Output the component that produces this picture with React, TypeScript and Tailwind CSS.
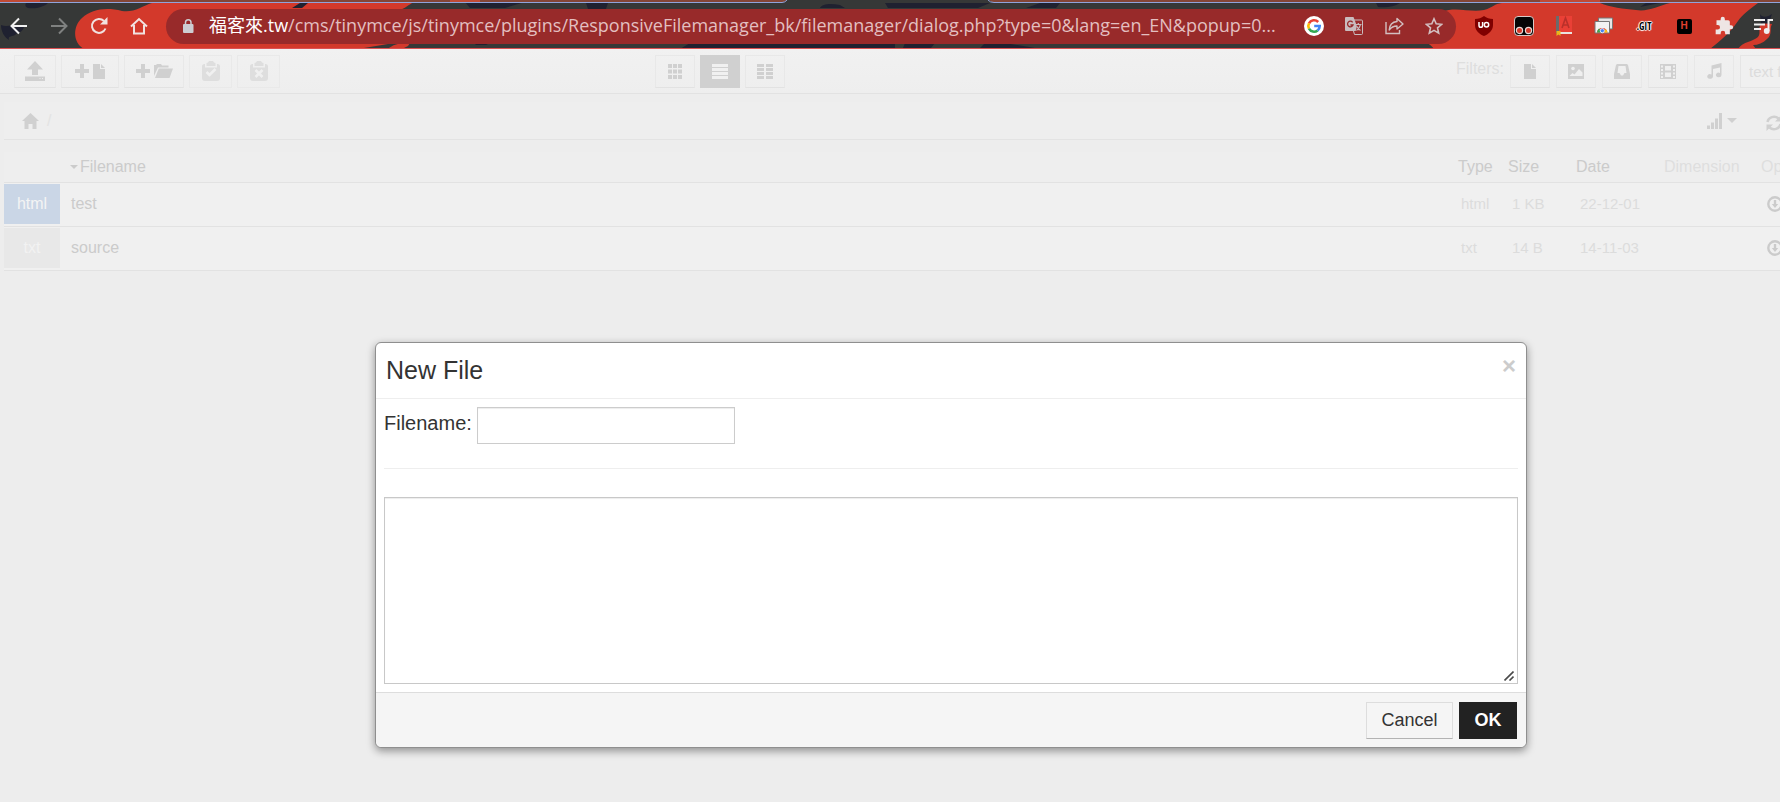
import type { ReactNode } from "react";

type IconProps = { className?: string };

/* ---------- browser bar ---------- */

function ThemeArtwork() {
  return (
    <svg className="absolute inset-0 h-full w-full" viewBox="0 0 1780 49" preserveAspectRatio="none" aria-hidden="true">
      <rect width="1780" height="49" fill="#363837" />
      <g fill="#1f2130">
        <path d="M26 3h22c-4 4-12 6-20 5-3-1-3-3-2-5z" />
        <path d="M1 25c8 3 15-3 23 2-2 6-6 5-9 8-5 2-7 1-6 5-5-3-8-9-8-15z" />
        <path d="M465 2h60l-20 6h-35zM586 3h22l-2 6h-18zM820 8c2-4 10-5 20-3l5 3zM885 3h105l-12 5h-90zM1040 3h20l-4 5h-30zM690 43h205v6H680zM474 43h16l-4 2h-10zM905 43h30l-4 5h-28zM985 43h20l30 5h-55zM1376 3h24c-6 4-14 5-22 4z" />
      </g>
      <g fill="#d3392b">
        <path d="M84 49C72 42 73 26 82 18c10-9 24-11 40-7 12 2 20-5 30-8h260c-5 3-8 6-18 10v30l-36 6z" />
        <path d="M388 49c4-4 10-6 22-6l-2 3-6 3z" />
        <path d="M1434 49c-3-4-7-7-12-7l20-30c14-6 28 1 42-2 10-3 10-6 18-7h256c-8 6-16 12-20 18-8 12-18 20-28 28z" />
        <path d="M1738 49c5-8 15-7 20-12 4-5-2-10 5-14l9 1c-3 5 1 10-5 15-4 4-9 6-14 6l3 4z" />
      </g>
      <path d="M1600 3h70c-12 3-22 9-34 7-12-1-26-3-36-7z" fill="#363837" />
      <path d="M292 8l8-5h8l-6 5zM1760 14c2 4 8 3 12 0l-3 9-8 1zM1640 7l20-4h-14z" fill="#1f2130" />
      <path d="M0 0h787l-3 2H0zM989 0h791v2H992z" fill="#834536" />
      <path d="M0 0h40v2H0zM450 0h30v2h-30zM1540 0h60v2h-60z" fill="#c04a35" />
      <path d="M0 2.500h782q3 0 5-2.500M988 0q2 2.500 6 2.500h786" fill="none" stroke="#8fa3dc" />
      <rect y="48" width="1780" height="1" fill="#dc5152" />
    </svg>
  );
}

const BackIcon = () => (
  <svg width="18" height="18" viewBox="0 0 18 18" fill="none" stroke="#f1f1f1" strokeWidth="2"><path d="M17 9H2M9 1.500L1.500 9 9 16.500" /></svg>
);
const ForwardIcon = () => (
  <svg width="18" height="18" viewBox="0 0 18 18" fill="none" stroke="#7f8180" strokeWidth="2"><path d="M1 9h15M9 1.500L16.500 9 9 16.500" /></svg>
);
const ReloadIcon = () => (
  <svg width="18" height="18" viewBox="0 0 18 18"><path d="M15.500 11.500A7 7 0 1 1 14 4" fill="none" stroke="#f1e2e0" strokeWidth="2" /><path d="M17.500 0v7.500H10z" fill="#f1e2e0" /></svg>
);
const ChromeHomeIcon = () => (
  <svg width="18" height="18" viewBox="0 0 18 18" fill="none" stroke="#f1e2e0" strokeWidth="2"><path d="M1 9.500L9 2l8 7.500M4 8v8.500h10V8" /></svg>
);
const LockIcon = () => (
  <svg width="12" height="14" viewBox="0 0 12 14"><rect x="1" y="5" width="10.500" height="9" rx="1" fill="#cdcdd2" /><path d="M3.500 5V3.500a2.700 2.700 0 0 1 5.500 0V5" fill="none" stroke="#cdcdd2" strokeWidth="1.500" /></svg>
);
const GoogleIcon = () => (
  <svg width="20" height="20" viewBox="0 0 20 20" fill="none" strokeWidth="2.600">
    <circle cx="10" cy="10" r="10" fill="#fff" />
    <path d="M14.200 6A5.700 5.700 0 0 0 5 7.300" stroke="#ea4335" />
    <path d="M5 7.300a5.700 5.700 0 0 0 0 5.400" stroke="#fbbc05" />
    <path d="M5 12.700a5.700 5.700 0 0 0 8.600 1.700" stroke="#34a853" />
    <path d="M13.600 14.400A5.700 5.700 0 0 0 15.700 10H10.200" stroke="#4285f4" />
  </svg>
);
const TranslateIcon = () => (
  <svg width="18" height="18" viewBox="0 0 18 18">
    <path d="M1 0h7.500l5.200 14H1a1 1 0 0 1-1-1V1a1 1 0 0 1 1-1z" fill="#c9bcbe" />
    <path d="M9 3h7.500a1 1 0 0 1 1 1v12.500a1 1 0 0 1-1 1H9.500l-1-3.500" fill="none" stroke="#c9bcbe" />
    <path d="M12 9l1.700 5-3 0z" fill="#982a2a" />
    <path d="M7.600 5.300A2.800 2.800 0 1 0 8 8H5.400" fill="none" stroke="#982a2a" strokeWidth="1.300" />
    <path d="M10.500 7.500h6M13.300 6v1.500M15.500 7.500c-.5 3-2 4.500-4 6M12 9.500c1 2 2 3 3.500 4" fill="none" stroke="#c9bcbe" strokeWidth="1.200" />
  </svg>
);
const ShareIcon = () => (
  <svg width="19" height="18" viewBox="0 0 19 18" fill="none" stroke="#d3bfc1" strokeWidth="1.400">
    <path d="M1 5v11.500h13.500V13" /><path d="M12 1.500L18 7l-6 5V9C8.500 9 6 10.500 4.200 13 4.500 8.500 7 5 12 4.500z" strokeLinejoin="round" />
  </svg>
);
const StarIcon = () => (
  <svg width="18" height="18" viewBox="0 0 18 18" fill="none" stroke="#d3bfc1" strokeWidth="1.600"><path d="M9 1.800l2.200 5 5.400.5-4.100 3.600 1.200 5.300L9 13.400l-4.700 2.800 1.200-5.300-4.100-3.600 5.400-.5z" /></svg>
);
const ShieldIcon = () => (
  <svg width="18" height="20" viewBox="0 0 18 20"><path d="M9 0c2.500 2 5.500 2.800 9 3v6c0 5.500-4 9-9 11-5-2-9-5.500-9-11V3c3.500-.2 6.500-1 9-3z" fill="#800000" /><path d="M4 6v3.500a1.800 1.800 0 0 0 3.600 0V6" fill="none" stroke="#fff" strokeWidth="1.500" /><circle cx="11.500" cy="8.700" r="2.200" fill="none" stroke="#fff" strokeWidth="1.500" /></svg>
);
const MonkeyIcon = () => (
  <svg width="20" height="20" viewBox="0 0 20 20"><rect x=".5" y=".5" width="19" height="19" rx="3.500" fill="#050505" stroke="#d9c9c6" /><g fill="#d3392b" stroke="#e9d9d6" strokeWidth="1.200"><circle cx="5.500" cy="14.500" r="3.100" /><circle cx="14.500" cy="14.500" r="3.100" /></g></svg>
);
const DictionaryIcon = () => (
  <svg width="18" height="20" viewBox="0 0 18 20"><path d="M1 0h3v17H1z" fill="#6b6b6b" /><path d="M4 0h13v16H4z" fill="#ea4036" /><path d="M7 12l3.500-10L14 12M8.300 9h4.500" fill="none" stroke="#b9302a" strokeWidth="1.600" /><path d="M3 16h14v2H3z" fill="#e9e4df" /><path d="M1.500 15h4v5l-2-1.500-2 1.500z" fill="#e9b61c" /></svg>
);
const CaptureIcon = () => (
  <svg width="20" height="18" viewBox="0 0 20 18"><path d="M4.500 1h14v11h-14z" fill="#e6e6e6" stroke="#777" /><path d="M1 4.500h14.500V16H1z" fill="#f3f3f3" stroke="#777" /><path d="M3 15.500a5.300 5.300 0 0 1 10.500 0z" fill="#e33b2e" /><path d="M3 15.500a5.300 5.300 0 0 1 2-4l2.500 4z" fill="#38a852" /><path d="M11.500 12a5 5 0 0 1 2 3.500H10z" fill="#fbc116" /><circle cx="8.300" cy="13.700" r="2.100" fill="#4285f4" stroke="#fff" strokeWidth=".8" /></svg>
);
const PuzzleIcon = () => (
  <svg width="20" height="20" viewBox="0 0 24 24" fill="#eee5e4"><path d="M20.500 11H19V7a2 2 0 0 0-2-2h-4V3.500a2.500 2.500 0 0 0-5 0V5H3v5.800h1.500a2.700 2.700 0 0 1 0 5.400H2V22h6v-1.500a2.700 2.700 0 0 1 5.400 0V22H19v-6h1.500a2.500 2.500 0 0 0 0-5z" /></svg>
);
const PlaylistIcon = () => (
  <svg width="20" height="17" viewBox="0 0 20 17"><path d="M0 2h11M0 6.500h11M0 11h7" stroke="#eee" strokeWidth="2" /><path d="M14.500 13V2H19" fill="none" stroke="#eee" strokeWidth="2" /><circle cx="12.700" cy="13" r="2.900" fill="#eee" /></svg>
);

function BarButton({ label, children, className = "" }: { label: string; children: ReactNode; className?: string }) {
  return (
    <button type="button" aria-label={label} className={`flex h-6 w-5 shrink-0 items-center justify-center ${className}`}>
      {children}
    </button>
  );
}

function BrowserBar() {
  return (
    <header className="relative h-[49px] overflow-hidden">
      <ThemeArtwork />
      <div className="relative flex h-full items-center gap-5 pt-[3px] pr-[6px] pl-[9px]">
        <nav className="flex items-center gap-5" aria-label="Browser">
          <BarButton label="Back"><BackIcon /></BarButton>
          <BarButton label="Forward"><ForwardIcon /></BarButton>
          <BarButton label="Reload"><ReloadIcon /></BarButton>
          <BarButton label="Home"><ChromeHomeIcon /></BarButton>
        </nav>
        <div className="-ml-[3px] flex h-[35px] min-w-0 flex-1 items-center rounded-full bg-[#982a2a] pr-3 pl-4">
          <LockIcon />
          <div className="ml-[15px] min-w-0 flex-1 overflow-hidden pb-[2px] font-['Open_Sans','Noto_Sans_CJK_TC',sans-serif] text-lg leading-6 whitespace-nowrap text-[#e3bfc0]">
            <span className="text-white">福客來.tw</span>/cms/tinymce/js/tinymce/plugins/ResponsiveFilemanager_bk/filemanager/dialog.php?type=0&amp;lang=en_EN&amp;popup=0...
          </div>
          <div className="flex items-center gap-5">
            <BarButton label="Search with Google"><GoogleIcon /></BarButton>
            <BarButton label="Translate"><TranslateIcon /></BarButton>
            <BarButton label="Share"><ShareIcon /></BarButton>
            <BarButton label="Bookmark"><StarIcon /></BarButton>
          </div>
        </div>
        <div className="-ml-[2px] flex items-center gap-5">
          <BarButton label="uBlock Origin"><ShieldIcon /></BarButton>
          <BarButton label="Tampermonkey"><MonkeyIcon /></BarButton>
          <BarButton label="Dictionary"><DictionaryIcon /></BarButton>
          <BarButton label="Screen capture"><CaptureIcon /></BarButton>
          <BarButton label="Git">
            <span className="font-['Open_Sans_Condensed','DejaVu_Sans_Condensed','Liberation_Sans',sans-serif] text-[10px] leading-3 font-bold text-black [text-shadow:0_0_1px_#fff,0_0_1px_#fff,0_0_1px_#fff,1px_0_1px_#fff,-1px_0_1px_#fff,0_1px_1px_#fff,0_-1px_1px_#fff]">.GIT</span>
          </BarButton>
          <BarButton label="H extension">
            <span className="flex h-[15px] w-[15px] items-center justify-center rounded-[2px] bg-black font-['Liberation_Sans',sans-serif] text-[10px] leading-3 font-bold text-[#e0402f]">H</span>
          </BarButton>
          <BarButton label="Extensions"><PuzzleIcon /></BarButton>
          <BarButton label="Media control"><PlaylistIcon /></BarButton>
        </div>
      </div>
    </header>
  );
}

/* ---------- file manager icons ---------- */

const UploadIcon = () => (
  <svg width="20" height="20" viewBox="0 0 20 20" fill="currentColor"><path d="M10 0l8 8.500h-5V14H7V8.500H2zM0 15.500h20V20H0z" /><path d="M14.500 17h1v1h-1zM17 17h1v1h-1z" fill="#eee" /></svg>
);
const PlusIcon = () => (
  <svg width="14" height="14" viewBox="0 0 14 14" fill="currentColor"><path d="M5 0h4v5h5v4H9v5H5V9H0V5h5z" /></svg>
);
const FileIcon = () => (
  <svg width="12" height="15" viewBox="0 0 12 15" fill="currentColor"><path d="M0 0h7v5h5v10H0zM8 0l4 4H8z" /></svg>
);
const FolderIcon = () => (
  <svg width="19" height="14" viewBox="0 0 19 14" fill="currentColor"><path d="M0 12V1h2l1-1h4l1 1.500h6.500V3.500H4z" /><path d="M4.800 4.500H19L15.500 14H1z" /></svg>
);
const ClipboardIcon = ({ mark }: { mark: string }) => (
  <svg width="18" height="20" viewBox="0 0 18 20"><path d="M6 1.500L7 0h4l1 1.500 1.500.5v3h-9V2z" fill="currentColor" /><path d="M3 3v3.500h12V3a2.500 2.500 0 0 1 3 2.500V17a3 3 0 0 1-3 3H3a3 3 0 0 1-3-3V5.500A2.500 2.500 0 0 1 3 3z" fill="currentColor" /><path d={mark} fill="none" stroke="#f0f0f0" strokeWidth="2.600" /></svg>
);
const GridIcon = () => (
  <svg width="14" height="15" viewBox="0 0 14 15" fill="currentColor"><path d="M0 0h4v4H0zM5 0h4v4H5zM10 0h4v4h-4zM0 5.500h4v4H0zM5 5.500h4v4H5zM10 5.500h4v4h-4zM0 11h4v4H0zM5 11h4v4H5zM10 11h4v4h-4z" /></svg>
);
const LinesIcon = () => (
  <svg width="16" height="15" viewBox="0 0 16 15" fill="currentColor"><path d="M0 0h16v3H0zM0 4h16v3H0zM0 8h16v3H0zM0 12h16v3H0z" /></svg>
);
const ColumnsIcon = () => (
  <svg width="16" height="15" viewBox="0 0 16 15" fill="currentColor"><path d="M0 0h7v3H0zM0 4h7v3H0zM0 8h7v3H0zM0 12h7v3H0zM9 0h7v3H9zM9 4h7v3H9zM9 8h7v3H9zM9 12h7v3H9z" /></svg>
);
const PictureIcon = () => (
  <svg width="16" height="15" viewBox="0 0 16 15"><path d="M0 0h16v15H0z" fill="currentColor" /><circle cx="5" cy="4.500" r="1.800" fill="#efefef" /><path d="M1.500 12l3-3 2 1.500L11 5l3.500 3.500V12z" fill="#efefef" /></svg>
);
const InboxIcon = () => (
  <svg width="16" height="15" viewBox="0 0 16 15" fill="currentColor" fillRule="evenodd"><path d="M3 0h10l1 1 2 9v5H0v-5l2-9zM4.500 2L3.500 9h2l1.500 2.500h2L10.500 9h2l-1-7z" /></svg>
);
const FilmIcon = () => (
  <svg width="16" height="15" viewBox="0 0 16 15" fill="currentColor" fillRule="evenodd"><path d="M0 0h16v15H0zM1 1.500v2h2v-2zM1 5v2h2V5zM1 8.500v2h2v-2zM1 12v2h2v-2zM13 1.500v2h2v-2zM13 5v2h2V5zM13 8.500v2h2v-2zM13 12v2h2v-2zM5 2v4.500h6V2zM5 8.500V13h6V8.500z" /></svg>
);
const MusicIcon = () => (
  <svg width="15" height="16" viewBox="0 0 15 16" fill="currentColor"><path d="M4.500 2.500L14.500 0v12a2.800 2.300 0 1 1-1.500-2V4.500L6 6v7.500a2.900 2.300 0 1 1-1.500-2z" /></svg>
);
const HomeIcon = () => (
  <svg width="17" height="16" viewBox="0 0 17 16" fill="currentColor"><path d="M8.500 0L17 8h-2.500v8h-4v-5h-4v5h-4V8H0z" /></svg>
);
const SignalIcon = () => (
  <svg width="15" height="16" viewBox="0 0 15 16" fill="currentColor"><path d="M0 12.500h3V16H0zM4 9.500h3V16H4zM8 5.500h3V16H8zM12 0h3v16h-3z" /></svg>
);
const CaretIcon = ({ className = "" }: IconProps) => (
  <svg width="10" height="5" viewBox="0 0 10 5" fill="currentColor" className={className}><path d="M0 0h10L5 5z" /></svg>
);
const RefreshIcon = () => (
  <svg width="16" height="16" viewBox="0 0 16 16"><path d="M1.500 7a6.500 6 0 0 1 11-3.500M14.500 9a6.500 6 0 0 1-11 3.500" fill="none" stroke="currentColor" strokeWidth="2.400" /><path d="M15.500 0v6.500H9zM.5 16V9.500H7z" fill="currentColor" /></svg>
);
const DownloadIcon = () => (
  <svg width="16" height="16" viewBox="0 0 16 16"><circle cx="8" cy="8" r="6.700" fill="none" stroke="currentColor" strokeWidth="2.400" /><path d="M6.800 4h2.400v4h2L8 12 4.800 8h2z" fill="currentColor" /></svg>
);

function ToolButton({ label, width, active, faint, children }: { label: string; width: string; active?: boolean; faint?: boolean; children: ReactNode }) {
  const tone = active ? "border-[#d0d0d0] bg-[#d0d0d0] text-[#f0f0f0]" : faint ? "border-[#e9e9e9] text-[#dedede]" : "border-[#e8e8e8] border-b-[#e2e2e2] text-[#d0d0d0]";
  return (
    <button type="button" aria-label={label} title={label} className={`flex h-[33px] shrink-0 items-center justify-center gap-1 border ${width} ${tone}`}>
      {children}
    </button>
  );
}

function Toolbar() {
  return (
    <div className="flex h-[45px] items-center border-b border-[#e2e2e2] bg-linear-to-b from-[#f1f1f1] to-[#eeeeee] pl-[14px]">
      <div className="flex flex-[4] gap-[5px]">
        <ToolButton label="Upload" width="w-[42px]"><UploadIcon /></ToolButton>
        <ToolButton label="New file" width="w-[58px]"><PlusIcon /><FileIcon /></ToolButton>
        <ToolButton label="New folder" width="w-[60px]"><PlusIcon /><FolderIcon /></ToolButton>
        <ToolButton label="Paste" width="w-[43px]" faint><ClipboardIcon mark="M4.500 11l3 3 6-6" /></ToolButton>
        <ToolButton label="Clear clipboard" width="w-[43px]" faint><ClipboardIcon mark="M5.500 9l7 7M12.500 9l-7 7" /></ToolButton>
      </div>
      <div className="flex flex-[5] gap-[5px]">
        <ToolButton label="Box view" width="w-10"><GridIcon /></ToolButton>
        <ToolButton label="List view" width="w-10" active><LinesIcon /></ToolButton>
        <ToolButton label="Columns view" width="w-10"><ColumnsIcon /></ToolButton>
      </div>
      <div className="flex w-[446px] shrink-0 items-center gap-[6px] text-base text-[#dedede]">
        <span className="w-12 pb-1">Filters:</span>
        <ToolButton label="Files" width="w-10"><FileIcon /></ToolButton>
        <ToolButton label="Images" width="w-10"><PictureIcon /></ToolButton>
        <ToolButton label="Archives" width="w-10"><InboxIcon /></ToolButton>
        <ToolButton label="Videos" width="w-10"><FilmIcon /></ToolButton>
        <ToolButton label="Music" width="w-10"><MusicIcon /></ToolButton>
        <input aria-label="Text filter" placeholder="text filter..." className="h-[33px] w-[120px] border border-[#e5e5e5] bg-[#f0f0f0] px-2 text-[15px] placeholder:text-[#dcdcdc]" />
      </div>
    </div>
  );
}

function Breadcrumb() {
  return (
    <div className="mt-2 ml-1 flex h-[38px] items-center border-b border-[#e3e3e3] bg-[#eeeeee] pl-[18px] text-[#d0d0d0]">
      <a href="#home" aria-label="Home"><HomeIcon /></a>
      <span className="ml-2 text-base text-[#e3e3e3]">/</span>
      <div className="ml-auto flex w-[195px] items-center">
        <button type="button" aria-label="Sorting" className="flex w-[59px] items-center gap-[5px]"><SignalIcon /><CaretIcon /></button>
        <a href="#refresh" aria-label="Refresh" className="pt-1"><RefreshIcon /></a>
      </div>
    </div>
  );
}

const files = [
  { ext: "html", name: "test", size: "1 KB", date: "22-12-01", badge: "bg-[#cad6e6] text-[#f4f4f4]" },
  { ext: "txt", name: "source", size: "14 B", date: "14-11-03", badge: "bg-[#e8e8e8] text-[#f2f2f2]" },
];

function FileTable() {
  return (
    <div className="mt-3 pl-1">
      <table className="w-full table-fixed border-collapse text-left text-base text-[#cbcbcb]">
        <colgroup>
          <col className="w-14" /><col /><col className="w-[50px]" /><col className="w-[68px]" /><col className="w-[88px]" /><col className="w-[97px]" /><col className="w-[141px]" />
        </colgroup>
        <thead>
          <tr className="h-[30px] border-b border-[#e2e2e2] bg-[#eeeeee]">
            <th aria-label="Kind" />
            <th className="pl-[10px] font-normal"><a href="#name" className="flex items-center gap-[2px]"><CaretIcon className="h-1 w-2" />Filename</a></th>
            <th className="font-normal"><a href="#type">Type</a></th>
            <th className="font-normal"><a href="#size">Size</a></th>
            <th className="font-normal"><a href="#date">Date</a></th>
            <th className="font-normal text-[#dedede]">Dimension</th>
            <th className="font-normal text-[#dedede]">Operations</th>
          </tr>
        </thead>
        <tbody>
          {files.map((f) => (
            <tr key={f.name} className="h-11 border-b border-[#e2e2e2] bg-[#f0f0f0] text-[15px] text-[#dcdcdc]">
              <td><div className={`flex h-10 items-center justify-center text-base ${f.badge}`}>{f.ext}</div></td>
              <td className="pl-[11px] text-base text-[#cbcbcb]"><a href="#file">{f.name}</a></td>
              <td className="pl-[3px]">{f.ext}</td>
              <td className="pl-1">{f.size}</td>
              <td className="pl-1">{f.date}</td>
              <td />
              <td className="pl-[6px] text-[#cbcbcb]"><a href="#download" aria-label="Download"><DownloadIcon /></a></td>
            </tr>
          ))}
        </tbody>
      </table>
    </div>
  );
}

/* ---------- dialog ---------- */

function NewFileDialog() {
  return (
    <div role="dialog" aria-labelledby="dialog-title" className="absolute inset-x-[375px] top-[293px] rounded-md border border-[#8f8f8f] bg-white text-[#333] shadow-[0_3px_9px_rgba(0,0,0,0.4)]">
      <div className="flex h-14 items-center justify-between border-b border-[#eeeeee] pr-[10px] pb-[2px] pl-[10px]">
        <h3 id="dialog-title" className="text-[25px] leading-8">New File</h3>
        <button type="button" aria-label="Close" className="pb-2 text-2xl leading-5 font-bold text-[#cccccc]">×</button>
      </div>
      <form className="p-2" onSubmit={(e) => e.preventDefault()}>
        <div className="flex items-center gap-[5px]">
          <label htmlFor="filename" className="pb-[6px] text-xl">Filename:</label>
          <input id="filename" className="h-[37px] w-[258px] border border-[#cccccc] px-2 shadow-[inset_0_1px_1px_rgba(0,0,0,0.075)]" />
        </div>
        <hr className="mt-6 mb-7 border-[#eeeeee]" />
        <div className="relative">
          <textarea aria-label="File content" className="block h-[187px] w-full resize-none border border-[#c8c8c8] p-2 shadow-[inset_0_1px_1px_rgba(0,0,0,0.075)]" />
          <svg width="10" height="10" viewBox="0 0 10 10" fill="none" stroke="#4a4a4a" strokeWidth="1.600" className="pointer-events-none absolute right-1 bottom-[3px]" aria-hidden="true">
            <path d="M.5 9.500L9.500.5M5.500 9.500l4-4" />
          </svg>
        </div>
      </form>
      <div className="flex justify-end gap-[6px] rounded-b-md border-t border-[#dddddd] bg-[#f5f5f5] pt-[9px] pr-[9px] pb-2 text-lg">
        <button type="button" className="h-[37px] w-[87px] border border-[#dddddd] border-b-[#b3b3b3] pb-[2px] leading-6">Cancel</button>
        <button type="submit" className="h-[37px] w-[58px] bg-[#222222] pb-[2px] leading-6 font-bold text-white">OK</button>
      </div>
    </div>
  );
}

export default function App() {
  return (
    <div className="flex min-h-screen flex-col overflow-hidden bg-[#ededed]">
      <BrowserBar />
      <main className="relative w-[calc(100%+122px)] flex-1 font-['Liberation_Sans',Arial,sans-serif]">
        <Toolbar />
        <Breadcrumb />
        <FileTable />
        <NewFileDialog />
      </main>
    </div>
  );
}
